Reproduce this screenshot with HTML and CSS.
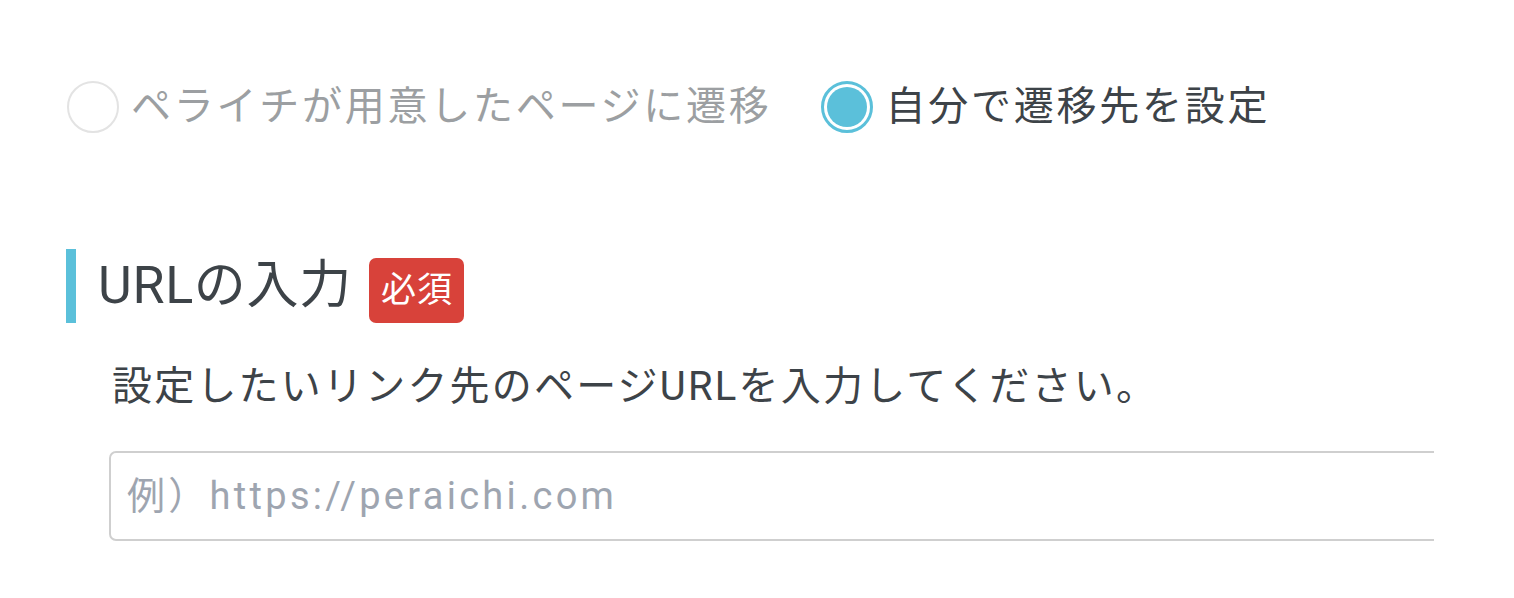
FILE: index.html
```html
<!DOCTYPE html>
<html lang="ja">
<head>
<meta charset="utf-8">
<link rel="stylesheet" href="styles.css">
</head>
<body>
<div class="page">
  <div class="radios">
    <label class="radio disabled">
      <span class="circle"></span>
      <span class="label">ペライチが用意したページに遷移</span>
    </label>
    <label class="radio checked">
      <span class="circle"><span class="dot"></span></span>
      <span class="label">自分で遷移先を設定</span>
    </label>
  </div>

  <div class="section">
    <h2 class="heading">
      <span class="title">URLの入力</span>
      <span class="badge">必須</span>
    </h2>
    <p class="desc">設定したいリンク先のページURLを入力してください。</p>
    <div class="field-clip">
      <input class="field" type="text" placeholder="例）https://peraichi.com">
    </div>
  </div>
</div>
</body>
</html>
```

FILE: styles.css
```css
* { box-sizing: border-box; }
html, body { margin: 0; padding: 0; background: #fff; }
body {
  font-family: Roboto, "Noto Sans CJK JP", sans-serif;
  color: #3d4348;
}
.page {
  padding: 81px 0 0 66px;
}
.radios {
  display: flex;
  align-items: center;
  gap: 50px;
  padding-left: 1px;
}
.radio {
  display: flex;
  align-items: center;
  gap: 12px;
}
.circle {
  width: 52px;
  height: 52px;
  border-radius: 50%;
  display: flex;
  align-items: center;
  justify-content: center;
  flex: none;
}
.radio.disabled .circle {
  border: 2px solid #e3e3e3;
}
.radio.checked .circle {
  border: 3px solid #5bc0da;
}
.dot {
  width: 40px;
  height: 40px;
  border-radius: 50%;
  background: #5bc0da;
}
.label {
  font-size: 40px;
  letter-spacing: 2.75px;
  line-height: 52px;
}
.radio.disabled .label { color: #9c9fa2; }
.radio.checked .label { color: #3d4348; }

.section {
  margin-top: 116px;
}
.heading {
  margin: 0;
  display: flex;
  align-items: center;
  height: 74px;
  border-left: 10px solid #5bc0da;
  padding-left: 22px;
  font-weight: 400;
}
.title {
  font-size: 52px;
  letter-spacing: 0.7px;
  line-height: 74px;
  color: #3d4348;
}
.badge {
  align-self: flex-end;
  margin-left: 17px;
  background: #d8423a;
  color: #fff;
  font-size: 35px;
  line-height: 65px;
  height: 65px;
  padding: 0 11px 0 12px;
  border-radius: 7px;
  letter-spacing: 1px;
}
.desc {
  margin: 38px 0 0 46px;
  font-size: 40px;
  line-height: 52px;
  letter-spacing: 2.2px;
  color: #3d4348;
}
.field-clip {
  margin: 38px 0 0 43px;
  width: 1325px;
  overflow: hidden;
}
.field {
  display: block;
  width: 1400px;
  height: 90px;
  border: 2px solid #cfcfcf;
  border-radius: 7px;
  padding: 0 0 0 16px;
  font-family: Roboto, "Noto Sans CJK JP", sans-serif;
  font-size: 38px;
  font-weight: 400;
  letter-spacing: 3.3px;
  color: #3d4348;
  background: #fff;
  outline: none;
}
.field::placeholder {
  color: #9ea5b0;
}
```
